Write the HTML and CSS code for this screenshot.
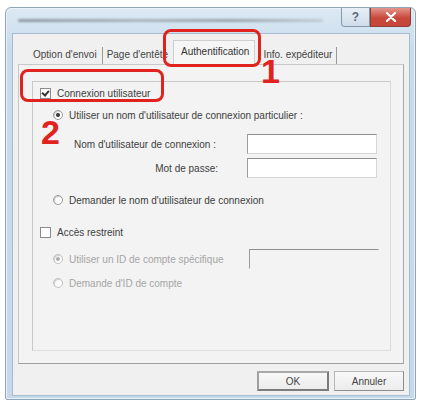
FILE: index.html
```html
<!DOCTYPE html>
<html lang="fr">
<head>
<meta charset="utf-8">
<link rel="stylesheet" href="styles.css">
</head>
<body>
<div class="window">
  <div class="titlebar">
    <div class="title-blur"></div>
    <div class="caption-buttons">
      <div class="cbtn help"><span>?</span></div>
      <div class="cbtn close"><svg width="12" height="10" viewBox="0 0 12 10"><path d="M2 1 L10 9 M10 1 L2 9" stroke="#fff" stroke-width="2.2" stroke-linecap="round"/></svg></div>
    </div>
  </div>
  <div class="client">
    <div class="tabs">
      <div class="tab t1">Option d'envoi</div>
      <div class="tab t2">Page d'entête</div>
      <div class="tab active">Authentification</div>
      <div class="tab t4">Info. expéditeur</div>
    </div>
    <div class="page">
      <div class="group">
        <div class="row r1"><span class="chk checked"></span><span>Connexion utilisateur</span></div>
        <div class="row r2 ind"><span class="radio on"></span><span>Utiliser un nom d'utilisateur de connexion particulier :</span></div>
        <div class="row r3"><span class="flabel">Nom d'utilisateur de connexion :</span><span class="input"></span></div>
        <div class="row r4"><span class="flabel">Mot de passe:</span><span class="input"></span></div>
        <div class="row r5 ind"><span class="radio"></span><span>Demander le nom d'utilisateur de connexion</span></div>
        <div class="row r6"><span class="chk"></span><span>Accès restreint</span></div>
        <div class="row r7 ind dis"><span class="radio on"></span><span class="dlabel">Utiliser un ID de compte spécifique</span><span class="input disabled"></span></div>
        <div class="row r8 ind dis"><span class="radio"></span><span>Demande d'ID de compte</span></div>
      </div>
    </div>
    <div class="buttons">
      <div class="btn default">OK</div>
      <div class="btn">Annuler</div>
    </div>
  </div>
</div>
<div class="mark m1"></div>
<div class="mark m2"></div>
<div class="num n1">1</div>
<div class="num n2">2</div>
</body>
</html>
```
FILE: styles.css
```css
html, body { margin: 0; padding: 0; background: #fff; }
body { width: 423px; height: 407px; position: relative; overflow: hidden;
  font-family: "Liberation Sans", Arial, sans-serif; font-size: 10px; color: #404040; }

.window { margin: 7px 0 0 5px; width: 411px; height: 393px; border: 1px solid #8fa6ba;
  border-radius: 6px 6px 2px 2px; background: linear-gradient(#dde9f4, #c9dcec 40px, #c5d9ea);
  display: flex; flex-direction: column; padding: 0 5px 3px 6px; box-sizing: border-box;
  box-shadow: inset 0 0 0 1px #e9f1f8; }

.titlebar { height: 25px; display: flex; align-items: flex-start; flex: none; }
.title-blur { margin: 11px 0 0 6px; width: 305px; height: 3px; border-radius: 2px;
  background: linear-gradient(90deg, #8e9aa3, #aab4bb 40%, #9aa5ad 70%, #c2ccd3);
  filter: blur(1px); }
.caption-buttons { margin-left: auto; display: flex; margin-right: -1px; }
.cbtn { height: 19px; display: flex; align-items: center; justify-content: center; box-sizing: border-box; }
.help { width: 29px; border: 1px solid #8699ab; border-top: none; border-radius: 0 0 0 4px;
  background: linear-gradient(#e8eff6, #cfdce8); color: #5b6b7a; font-size: 12px; font-weight: bold; }
.close { width: 41px; border: 1px solid #8d3b33; border-top: none; border-radius: 0 0 4px 0;
  background: linear-gradient(#e3968c, #c9483c 55%, #c4463a); }

.client { flex: 1; background: #f0f0f0; border: 1px solid #a9bccd; display: flex; flex-direction: column;
  padding: 0 5px 0 5px; }

.tabs { display: flex; align-items: flex-end; height: 30px; padding-left: 14px; flex: none; }
.tab { height: 17px; line-height: 15px; color: #444; }
.t1 { padding: 0 5px 0 1px; }
.t2 { border-left: 1px solid #9a9a9a; padding: 0 4px 0 4px; }
.t4 { border-right: 1px solid #9a9a9a; padding: 0 4px 0 8px; }
.tab.active { height: 24px; line-height: 21px; padding: 0 5px 0 7px; margin-left: 1px; background: #f6f6f6;
  border: 1px solid #cfcfcf; border-bottom: none; color: #333; margin-bottom: -1px; position: relative; }

.page { flex: none; height: 300px; background: #f3f3f3; border: 1px solid #c8c8c8; border-right-color: #a8a8a8;
  border-bottom-color: #a0a0a0; box-sizing: border-box; padding: 16px 12px 0 13px; }
.group { height: 270px; border: 1px solid #c9c9c9; border-right-color: #dadada; border-bottom-color: #dedede;
  box-sizing: border-box; padding-left: 7px; display: flex; flex-direction: column; }

.row { height: 22px; display: flex; align-items: center; flex: none; white-space: nowrap; }
.ind { padding-left: 13px; }
.r3 { margin-top: 7px; }
.r4 { margin-top: 2px; }
.r5 { margin-top: 10px; }
.r6 { margin-top: 10px; }
.r7 { margin-top: 5px; }
.r8 { margin-top: 2px; }
.dis { color: #a5a5a5; }

.chk { width: 9px; height: 9px; border: 1px solid #8a8a8a; background: #fff; margin-right: 6px; position: relative; flex: none; }
.chk.checked::after { content: ""; position: absolute; left: 2px; top: 0px; width: 3px; height: 5px;
  border: solid #333; border-width: 0 2px 2px 0; transform: rotate(40deg); }
.radio { width: 8px; height: 8px; border-radius: 50%; border: 1px solid #9a9a9a; background: #fff;
  margin-right: 6px; position: relative; flex: none; box-shadow: inset 1px 1px 1px #ccc; }
.radio.on::after { content: ""; position: absolute; left: 2px; top: 2px; width: 4px; height: 4px; border-radius: 50%; background: #333; }
.dis .radio { border-color: #c0c0c0; }
.dis .radio.on::after { background: #aaa; }

.flabel { width: 176px; text-align: right; margin-right: 31px; }
.r4 .flabel { width: 178px; margin-right: 29px; }
.input { width: 128px; height: 18px; background: #fff; border: 1px solid #d6d6d6; border-top-color: #8f8f8f; border-left-color: #9c9c9c; flex: none; }
.dlabel { width: 160px; margin-right: 20px; }
.input.disabled { background: #f3f3f3; border-right-color: #f3f3f3; border-bottom-color: #f3f3f3; }

.buttons { flex: none; display: flex; justify-content: flex-end; gap: 5px; padding: 7px 0 0 0; }
.btn { width: 70px; height: 20px; box-sizing: border-box; border: 1px solid #b5b5b5; border-right-color: #8d8d8d;
  border-bottom-color: #8d8d8d; background: linear-gradient(#f8f8f8, #ececec); display: flex; align-items: center;
  justify-content: center; color: #444; }
.btn.default { border: 2px solid #7c7c7c; border-top-color: #a8a8a8; border-left-color: #a0a0a0; width: 72px; }

.mark { position: absolute; border: 3px solid #e0231f; border-radius: 8px; box-sizing: border-box; }
.m1 { left: 163px; top: 29px; width: 98px; height: 38px; }
.m2 { left: 20px; top: 69px; width: 144px; height: 33px; }
.num { position: absolute; color: #e0231f; font-weight: bold; font-size: 34px; line-height: 1; font-family: "Liberation Sans", Arial, sans-serif; }
.n1 { left: 261px; top: 54px; }
.n2 { left: 41px; top: 115px; }
```
